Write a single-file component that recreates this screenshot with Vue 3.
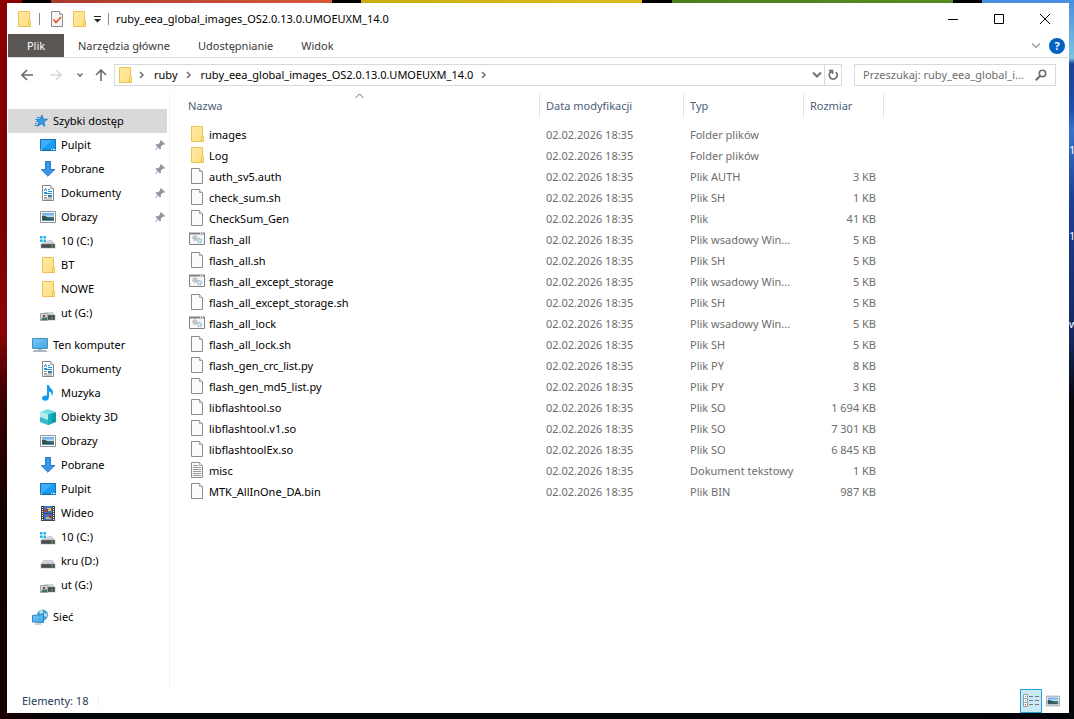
<template>
  <div class="desktop">
    <div class="desktop-labels" aria-hidden="true">
      <span class="desktop-label label-one">1</span>
      <span class="desktop-label label-ten">10</span>
      <span class="desktop-label label-w">w</span>
    </div>

    <!-- 아이콘 정의 -->
    <svg class="icon-defs" aria-hidden="true">
      <defs>
        <linearGradient id="g-folder" x1="0" y1="0" x2="1" y2="1">
          <stop offset="0" stop-color="#ffe9a2" />
          <stop offset="1" stop-color="#ffdf80" />
        </linearGradient>
        <linearGradient id="g-screen" x1="0" y1="0" x2="1" y2="1">
          <stop offset="0" stop-color="#7cc8f8" />
          <stop offset="1" stop-color="#3ba3e8" />
        </linearGradient>
        <linearGradient id="g-photo" x1="0" y1="0" x2="0" y2="1">
          <stop offset="0" stop-color="#5b9be6" />
          <stop offset="0.5" stop-color="#c9e8f8" />
          <stop offset="0.55" stop-color="#3f6d6a" />
          <stop offset="1" stop-color="#5a8fc0" />
        </linearGradient>
      </defs>
      <symbol id="i-folder" viewBox="0 0 16 16">
        <path d="M2.5.5h11v9.500h1v5.500h-12z" fill="url(#g-folder)" stroke="#e9c452" />
        <path d="M12.500 15V11l1-1" fill="none" stroke="#e9c452" />
      </symbol>
      <symbol id="i-file" viewBox="0 0 16 16">
        <path d="M2.500.5h8l3 3v12h-11z" fill="#fafbfb" stroke="#8c8c8c" />
        <path d="M10.500.5v3h3" fill="#e4e4e4" stroke="#a5a5a5" />
      </symbol>
      <symbol id="i-text" viewBox="0 0 16 16">
        <path d="M2.500.5h8l3 3v12h-11z" fill="#fafbfb" stroke="#8c8c8c" />
        <path d="M10.500.5v3h3" fill="#e4e4e4" stroke="#a5a5a5" />
        <path d="M4 3.500h5M4 5.500h8M4 7.500h8M4 9.500h8M4 11.500h8M4 13.500h8" stroke="#999" />
      </symbol>
      <symbol id="i-batch" viewBox="0 0 16 16">
        <path d="M.5 2.500h15v11H.5z" fill="#f8f8f8" stroke="#808286" />
        <path d="M0 2.500h16" stroke="#808286" stroke-width="2" />
        <path d="M11 2.500h1M13 2.500h1" stroke="#fff" />
        <circle cx="6" cy="7" r="2" fill="none" stroke="#a2a8ac" stroke-width="1.500" stroke-dasharray="1 .6" />
        <circle cx="6" cy="7" r="1.200" fill="#e5e5e5" stroke="#8d9499" stroke-width=".5" />
        <circle cx="10.500" cy="9.500" r="2" fill="#d6ecf8" stroke="#8fb4cb" stroke-width="1.500" stroke-dasharray="1 .6" />
      </symbol>
      <symbol id="i-check" viewBox="0 0 16 16">
        <path d="M2.500.5h8l3 3v12h-11z" fill="#f5f5f5" stroke="#8c8c8c" />
        <path d="M10.500.5v3h3" fill="#e4e4e4" stroke="#a5a5a5" />
        <path d="M4.500 8.500l2.500 3L12 6" fill="none" stroke="#e4572b" stroke-width="1.600" />
      </symbol>
      <symbol id="i-star" viewBox="0 0 16 16">
        <path d="M10 2l1.200 4.100 4.300.2-3.600 2.500 1.100 4.700-3.500-2.700-4.200 2.500 1.700-4.300L4 6.200l4 .1z" fill="#2f9be4" stroke="#1f78bd" stroke-width=".8" />
        <path d="M5 4.500h3M3 6.500h2M4 8.500h2M3 10.500h2M2 12.500h3" stroke="#3b93cf" />
      </symbol>
      <symbol id="i-desktop" viewBox="0 0 16 16">
        <path d="M.5 2.500h15v11H.5z" fill="#1e9bf3" stroke="#1273bd" />
        <path d="M1 12V3h12z" fill="#3daefa" />
        <path d="M1 12.500h14" stroke="#1b7dc9" />
        <path d="M1 12.500h1M11 12.500h1M13 12.500h2" stroke="#fff" />
      </symbol>
      <symbol id="i-download" viewBox="0 0 16 16">
        <path d="M5.500.5h5v8h4.300L8 15.300 1.200 8.500h4.300z" fill="#3c96e6" stroke="#2b7cc7" />
      </symbol>
      <symbol id="i-document" viewBox="0 0 16 16">
        <path d="M2.500.5h8l3 3v12h-11z" fill="#fff" stroke="#858585" />
        <path d="M10.500.5v3h3" fill="#eee" stroke="#a5a5a5" />
        <path d="M4 7.500h3M8 4.500h2M8 6.500h4M4 8.500h8" stroke="#2295d8" />
        <path d="M4.500 6l1-3 1 3" fill="none" stroke="#2295d8" />
        <path d="M4 10.500h3M4 12.500h3M4 14h8" stroke="#8d9499" />
        <path d="M8 10h4v2.500H8z" fill="#3f7fa8" />
      </symbol>
      <symbol id="i-picture" viewBox="0 0 16 16">
        <path d="M.5 2.500h15v11H.5z" fill="#fff" stroke="#909396" />
        <path d="M2 4h12v8H2z" fill="url(#g-photo)" />
        <path d="M2 7q3-1 6 1.500t6 1.500v1H2z" fill="#2f5557" />
      </symbol>
      <symbol id="i-windisk" viewBox="0 0 16 16">
        <path d="M0 3h2.500v2.500H0zM3.500 3H6v2.500H3.500zM0 6.500h2.500V9H0zM3.500 6.500H6V9H3.500z" fill="#15b4ee" />
        <path d="M7 7h5l3 4H1l2-2h4z" fill="#d0d3d5" />
        <path d="M1 11h14v4H1z" fill="#474b4d" stroke="#9a9da0" stroke-width=".6" />
        <path d="M11 13h2" stroke="#54dd5c" />
      </symbol>
      <symbol id="i-disk" viewBox="0 0 16 16">
        <path d="M3 7h10l2 4H1z" fill="#d0d3d5" />
        <path d="M1 11h14v4H1z" fill="#474b4d" stroke="#9a9da0" stroke-width=".6" />
        <path d="M11 13h2" stroke="#54dd5c" />
      </symbol>
      <symbol id="i-netdisk" viewBox="0 0 16 16">
        <path d="M4 7h9l2 3H4z" fill="#d0d3d5" />
        <path d="M6 10h9v5H6z" fill="#474b4d" stroke="#9a9da0" stroke-width=".6" />
        <path d="M11 13h2" stroke="#54dd5c" />
        <path d="M.5 8.500h7v7h-7z" fill="#cfdcd8" stroke="#a2a5a5" />
        <path d="M1 15l2-3 1 1 3-1v3z" fill="#42715c" />
        <circle cx="4" cy="11" r="1.300" fill="#7a5547" />
      </symbol>
      <symbol id="i-computer" viewBox="0 0 16 16">
        <path d="M.5 1.500h15v10H.5z" fill="url(#g-screen)" stroke="#4d8db5" />
        <path d="M6 12h4v1H6z" fill="#9bb2c0" />
        <path d="M2 13.500h12l1 1H1z" fill="#b9c4cb" stroke="#8c9aa3" stroke-width=".6" />
      </symbol>
      <symbol id="i-music" viewBox="0 0 16 16">
        <path d="M7 0h2c0 3 4 4 4 7.500 0 1.500-.6 2.700-1.500 3.500.5-2.500-.3-4-2.500-4.500V12c0 2.300-1.500 3.700-3.700 3.700C3.500 15.700 2 14.800 2 13.200 2 11.500 4 10 7 10.500z" fill="#119bee" />
      </symbol>
      <symbol id="i-cube" viewBox="0 0 16 16">
        <path d="M0 3l8-3 8 3-8 2.500z" fill="#7adbe2" />
        <path d="M0 3l8 2.500V16l-8-3z" fill="#b3edf0" />
        <path d="M0 8l8 3v5l-8-3z" fill="#35bdc8" />
        <path d="M16 3L8 5.500V16l8-3z" fill="#1299a9" />
        <path d="M8 5.500l4-1.300v10.300L8 16z" fill="#18b2c0" />
      </symbol>
      <symbol id="i-video" viewBox="0 0 16 16">
        <path d="M1 1h14v15H1z" fill="#444" />
        <path d="M4 1h8v7H4z" fill="#4178cd" />
        <path d="M4 9h8v6H4z" fill="#3a74d6" />
        <path d="M7 3h4v3H7zM6 12h5v2H6z" fill="#e9b33b" />
        <path d="M5 4h3v3H5zM9 10h2v3H9z" fill="#a23c2d" />
        <path d="M2.500 2v14M13.500 2v14" stroke="#fff" stroke-dasharray="1 1" />
      </symbol>
      <symbol id="i-network" viewBox="0 0 16 16">
        <circle cx="10.500" cy="6" r="5.500" fill="#4b9fcd" />
        <path d="M7 2q3-2 4 0t-3 3zM12 4l3 1v3l-3-1z" fill="#b8e0f2" />
        <path d="M.5 6.500l11-1v8l-11-.5z" fill="url(#g-screen)" stroke="#2f83bd" />
        <path d="M3 15h6" stroke="#94a9b5" />
      </symbol>
      <symbol id="i-pin" viewBox="0 0 16 16">
        <path d="M9 3l4 4-1 1-1-.4-2.200 2.200.2 1.700-1 1L6 10.500 3.500 13l-.5-.5L5.500 10 3.500 8l1-1 1.700.2L8.400 5 8 4z" fill="#8c98a5" transform="translate(1 0)" />
      </symbol>
      <symbol id="i-details" viewBox="0 0 16 16">
        <path d="M.5 1.500h4v4h-4zM.5 5.500h4v4h-4zM.5 9.500h4v4h-4z" fill="#fff" stroke="#999" />
        <path d="M2 3.500h1" stroke="#24864b" />
        <path d="M2 7.500h1" stroke="#3b8ce0" />
        <path d="M2 11.500h1" stroke="#d32a1e" />
        <path d="M6 3.500h4M12 3.500h4M6 7.500h4M12 7.500h4M6 11.500h4M12 11.500h4" stroke="#777" />
      </symbol>
    </svg>

    <div class="window">
      <header class="title-bar">
        <svg class="icon"><use href="#i-folder" /></svg>
        <span class="title-sep"></span>
        <button class="quick-btn" aria-label="Właściwości"><svg class="icon"><use href="#i-check" /></svg></button>
        <button class="quick-btn" aria-label="Nowy folder"><svg class="icon"><use href="#i-folder" /></svg></button>
        <button class="quick-btn" aria-label="Dostosuj">
          <svg class="quick-arrow" viewBox="0 0 8 8"><path d="M1 1.500h7" stroke="#222" /><path d="M1 4h7L4.500 7.500z" fill="#222" /></svg>
        </button>
        <span class="title-sep"></span>
        <span class="title-text">{{ folderName }}</span>
        <div class="window-controls">
          <button aria-label="Minimalizuj"><svg viewBox="0 0 10 10"><path d="M0 5.500h10" /></svg></button>
          <button aria-label="Maksymalizuj"><svg viewBox="0 0 10 10"><path d="M.5.5h9v9h-9z" /></svg></button>
          <button aria-label="Zamknij"><svg viewBox="0 0 10 10"><path d="M0 0l10 10M10 0L0 10" /></svg></button>
        </div>
      </header>

      <nav class="ribbon">
        <button
          v-for="tab in tabs"
          :key="tab"
          class="ribbon-tab"
          :class="{ file: tab === 'Plik' }"
        >{{ tab }}</button>
        <button class="ribbon-toggle" aria-label="Rozwiń wstążkę">
          <svg class="chevron-down" viewBox="0 0 10 6"><path d="M1 .5l4 4 4-4" stroke="#a0a0a0" stroke-width="1.500" /></svg>
        </button>
        <button class="help-btn" aria-label="Pomoc">?</button>
      </nav>

      <div class="address-row">
        <div class="nav-buttons">
          <button aria-label="Wstecz"><svg viewBox="0 0 12 12"><path d="M12 6H1M6 1L1 6l5 5" stroke="#6b6b6b" /></svg></button>
          <button aria-label="Dalej" disabled><svg viewBox="0 0 12 12"><path d="M0 6h11M6 1l5 5-5 5" stroke="#dadada" /></svg></button>
          <button class="history-btn" aria-label="Ostatnie lokalizacje"><svg viewBox="0 0 12 12"><path d="M3.500 4.500l2.500 2.500 2.500-2.500" stroke="#777" /></svg></button>
          <button aria-label="W górę"><svg viewBox="0 0 12 12"><path d="M6 12V1M1 6l5-5 5 5" stroke="#6b6b6b" /></svg></button>
        </div>
        <div class="address-box">
          <svg class="icon"><use href="#i-folder" /></svg>
          <svg class="crumb-arrow" viewBox="0 0 6 8"><path d="M1 1l3 3-3 3" /></svg>
          <template v-for="crumb in crumbs" :key="crumb">
            <button class="crumb">{{ crumb }}</button>
            <svg class="crumb-arrow" viewBox="0 0 6 8"><path d="M1 1l3 3-3 3" /></svg>
          </template>
          <button class="address-drop" aria-label="Poprzednie lokalizacje">
            <svg class="chevron-down" viewBox="0 0 10 6"><path d="M1 .5l4 4 4-4" stroke="#6f6f6f" stroke-width="2" /></svg>
          </button>
          <button class="refresh-btn" aria-label="Odśwież">
            <svg viewBox="0 0 12 12"><path d="M9 3.200A4 4 0 1 1 4.500 2.500M2 1.500h3.500V5" stroke="#6b6b6b" stroke-width="1.600" fill="none" /></svg>
          </button>
        </div>
        <label class="search-box">
          <input v-model="search" type="text" aria-label="Przeszukaj" placeholder="Przeszukaj: ruby_eea_global_i..." />
          <svg viewBox="0 0 12 12"><circle cx="7.500" cy="4.500" r="3.200" /><path d="M5 7L.8 11.200" stroke-width="2" /></svg>
        </label>
      </div>

      <div class="content">
        <aside class="sidebar">
          <ul v-for="group in groups" :key="group.name" class="tree-group">
            <li>
              <button
                class="tree-item root"
                :class="{ selected: selected === group.name }"
                @click="selected = group.name"
              >
                <svg class="icon"><use :href="'#i-' + group.icon" /></svg>
                <span>{{ group.name }}</span>
              </button>
            </li>
            <li v-for="item in group.items" :key="item.name">
              <button
                class="tree-item"
                :class="{ selected: selected === group.name + item.name }"
                @click="selected = group.name + item.name"
              >
                <svg class="icon"><use :href="'#i-' + item.icon" /></svg>
                <span>{{ item.name }}</span>
                <svg v-if="item.pinned" class="icon pin"><use href="#i-pin" /></svg>
              </button>
            </li>
          </ul>
        </aside>

        <main class="file-area">
          <table class="file-table">
            <colgroup>
              <col class="col-name" />
              <col class="col-date" />
              <col class="col-type" />
              <col class="col-size" />
            </colgroup>
            <thead>
              <tr>
                <th class="name-cell">
                  Nazwa
                  <svg class="sort-arrow" viewBox="0 0 9 6"><path d="M.5 5l4-4 4 4" /></svg>
                </th>
                <th>Data modyfikacji</th>
                <th>Typ</th>
                <th>Rozmiar</th>
              </tr>
            </thead>
            <tbody>
              <tr v-for="file in files" :key="file.name">
                <td class="name-cell">
                  <div class="file-name">
                    <svg class="icon"><use :href="'#i-' + file.icon" /></svg>
                    <span>{{ file.name }}</span>
                  </div>
                </td>
                <td>02.02.2026 18:35</td>
                <td>{{ file.type }}</td>
                <td class="size-cell">{{ file.size }}</td>
              </tr>
            </tbody>
          </table>
        </main>
      </div>

      <footer class="status-bar">
        <span class="status-count">Elementy: {{ files.length }}</span>
        <div class="view-buttons">
          <button class="active" aria-label="Szczegóły"><svg class="icon"><use href="#i-details" /></svg></button>
          <button aria-label="Duże ikony"><svg class="icon small"><use href="#i-picture" /></svg></button>
        </div>
      </footer>
    </div>
  </div>
</template>

<script setup>
import { ref } from 'vue';

const folderName = 'ruby_eea_global_images_OS2.0.13.0.UMOEUXM_14.0';
const tabs = ['Plik', 'Narzędzia główne', 'Udostępnianie', 'Widok'];
const crumbs = ['ruby', folderName];

const search = ref('');
const selected = ref('Szybki dostęp');

// 1. 왼쪽 트리
const groups = [
  {
    name: 'Szybki dostęp',
    icon: 'star',
    items: [
      { name: 'Pulpit', icon: 'desktop', pinned: true },
      { name: 'Pobrane', icon: 'download', pinned: true },
      { name: 'Dokumenty', icon: 'document', pinned: true },
      { name: 'Obrazy', icon: 'picture', pinned: true },
      { name: '10 (C:)', icon: 'windisk' },
      { name: 'BT', icon: 'folder' },
      { name: 'NOWE', icon: 'folder' },
      { name: 'ut (G:)', icon: 'netdisk' },
    ],
  },
  {
    name: 'Ten komputer',
    icon: 'computer',
    items: [
      { name: 'Dokumenty', icon: 'document' },
      { name: 'Muzyka', icon: 'music' },
      { name: 'Obiekty 3D', icon: 'cube' },
      { name: 'Obrazy', icon: 'picture' },
      { name: 'Pobrane', icon: 'download' },
      { name: 'Pulpit', icon: 'desktop' },
      { name: 'Wideo', icon: 'video' },
      { name: '10 (C:)', icon: 'windisk' },
      { name: 'kru (D:)', icon: 'disk' },
      { name: 'ut (G:)', icon: 'netdisk' },
    ],
  },
  { name: 'Sieć', icon: 'network', items: [] },
];

// 2. 파일 목록
const files = [
  { name: 'images', icon: 'folder', type: 'Folder plików', size: '' },
  { name: 'Log', icon: 'folder', type: 'Folder plików', size: '' },
  { name: 'auth_sv5.auth', icon: 'file', type: 'Plik AUTH', size: '3 KB' },
  { name: 'check_sum.sh', icon: 'file', type: 'Plik SH', size: '1 KB' },
  { name: 'CheckSum_Gen', icon: 'file', type: 'Plik', size: '41 KB' },
  { name: 'flash_all', icon: 'batch', type: 'Plik wsadowy Win...', size: '5 KB' },
  { name: 'flash_all.sh', icon: 'file', type: 'Plik SH', size: '5 KB' },
  { name: 'flash_all_except_storage', icon: 'batch', type: 'Plik wsadowy Win...', size: '5 KB' },
  { name: 'flash_all_except_storage.sh', icon: 'file', type: 'Plik SH', size: '5 KB' },
  { name: 'flash_all_lock', icon: 'batch', type: 'Plik wsadowy Win...', size: '5 KB' },
  { name: 'flash_all_lock.sh', icon: 'file', type: 'Plik SH', size: '5 KB' },
  { name: 'flash_gen_crc_list.py', icon: 'file', type: 'Plik PY', size: '8 KB' },
  { name: 'flash_gen_md5_list.py', icon: 'file', type: 'Plik PY', size: '3 KB' },
  { name: 'libflashtool.so', icon: 'file', type: 'Plik SO', size: '1 694 KB' },
  { name: 'libflashtool.v1.so', icon: 'file', type: 'Plik SO', size: '7 301 KB' },
  { name: 'libflashtoolEx.so', icon: 'file', type: 'Plik SO', size: '6 845 KB' },
  { name: 'misc', icon: 'text', type: 'Dokument tekstowy', size: '1 KB' },
  { name: 'MTK_AllInOne_DA.bin', icon: 'file', type: 'Plik BIN', size: '987 KB' },
];
</script>

<style>
body {
  margin: 0;
  background: #000;
}
</style>

<style scoped>
/* ── 1. 바탕화면 ── */
.desktop {
  position: relative;
  box-sizing: border-box;
  min-height: 100vh;
  padding: 3px 5px 6px 7px;
  display: flex;
  overflow: hidden;
  font-family: "Noto Sans", "Open Sans", sans-serif;
  font-size: 11px;
  line-height: 16px;
  color: #000;
  background:
    linear-gradient(90deg, #8c0000 0 22px, #000 22px 51px, #a8382c 51px, #d9583a 332px, #000 332px 361px, #c9ae10 361px, #d8bd1a 642px, #000 642px 672px, #4d7d1c 672px, #5a8a22 953px, #000 953px 982px, #4a90e0 982px) top / 100% 3px no-repeat,
    linear-gradient(180deg, #8c0000, #7a0000 200px, #8a0505 330px, #3a0000 400px, #120000 520px, #1a0003 100%) left / 7px 100% no-repeat,
    linear-gradient(180deg, #4a90e0, #7cc4e0 58px, #1c3f94 64px, #1e4fae 110px, #3a72cc 130px, #1c3f94 200px, #14265c 340px, #04060c 400px, #010409 100%) right / 5px 100% no-repeat,
    linear-gradient(90deg, #1a0003, #020608 60px, #020409);
}

button {
  font: inherit;
  color: inherit;
  background: none;
  border: 0;
  padding: 0;
  margin: 0;
}

svg {
  display: block;
  flex-shrink: 0;
}

.desktop-label {
  position: absolute;
  left: calc(100% - 5px);
  color: #fff;
}
.label-one { top: 142px; }
.label-ten { top: 228px; }
.label-w { top: 316px; }

.icon-defs { position: absolute; width: 0; height: 0; }
.icon { width: 16px; height: 16px; }

/* ── 2. 창 ── */
.window {
  flex: 1;
  min-width: 0;
  display: flex;
  flex-direction: column;
  padding: 0 1px;
  background: #fff;
}

.title-bar {
  display: flex;
  align-items: center;
  height: 31px;
  padding-left: 8px;
}
.title-sep { width: 1px; height: 12px; margin: 0 7px; background: #8a8a8a; }
.quick-btn { margin-left: 2px; }
.quick-btn + .quick-btn { margin-left: 6px; }
.quick-arrow { width: 8px; height: 8px; }
.title-text {
  flex: 1;
  min-width: 0;
  overflow: hidden;
  white-space: nowrap;
}

.window-controls { display: flex; align-self: stretch; }
.window-controls button {
  width: 46px;
  display: flex;
  align-items: center;
  justify-content: center;
}
.window-controls button:hover { background: #e5e5e5; }
.window-controls svg {
  width: 10px;
  height: 10px;
  fill: none;
  stroke: #000;
}

/* ── 3. 리본 탭 ── */
.ribbon {
  display: flex;
  align-items: center;
  height: 23px;
  padding-right: 3px;
  border-bottom: 1px solid #dadbdc;
  color: #3a3a3a;
}
.ribbon-tab { align-self: stretch; padding: 0 14px; }
.ribbon-tab.file { width: 56px; padding: 0; background: #595654; color: #fff; }
.ribbon-toggle { margin-left: auto; padding: 4px 8px; }
.chevron-down { width: 10px; height: 6px; fill: none; }
.help-btn {
  width: 16px;
  height: 16px;
  border-radius: 50%;
  background: #0063c1;
  color: #fff;
  font-weight: 700;
}

/* ── 4. 주소 표시줄 ── */
.address-row {
  display: flex;
  align-items: center;
  height: 34px;
  padding: 0 12px 0 13px;
}
.nav-buttons { display: flex; align-items: center; }
.nav-buttons button { width: 12px; margin-right: 17px; }
.nav-buttons .history-btn { margin-right: 9px; }
.nav-buttons button:last-child { margin-right: 7px; }
.nav-buttons button:nth-child(2) { margin-right: 12px; }
.nav-buttons svg { width: 12px; height: 12px; fill: none; stroke-width: 1.6; }
.address-box {
  flex: 1;
  min-width: 0;
  display: flex;
  align-items: center;
  box-sizing: border-box;
  height: 22px;
  padding-left: 2px;
  border: 1px solid #d9d9d9;
}
.crumb { margin: 0 8px 0 9px; white-space: nowrap; }
.crumb-arrow { width: 6px; height: 8px; fill: none; stroke: #6f6f6f; stroke-width: 1.5; }
.icon + .crumb-arrow { margin-left: 6px; }
.address-drop { margin-left: auto; padding: 6px 2px; }
.refresh-btn {
  align-self: stretch;
  padding: 0 2px;
  border-left: 1px solid #d9d9d9;
}
.refresh-btn svg { width: 12px; height: 12px; }
.search-box {
  display: flex;
  align-items: center;
  box-sizing: border-box;
  width: 202px;
  height: 22px;
  margin-left: 12px;
  padding: 0 8px;
  border: 1px solid #d9d9d9;
}
.search-box input {
  flex: 1;
  min-width: 0;
  padding: 0;
  border: 0;
  outline: 0;
  font: inherit;
  background: none;
}
.search-box input::placeholder { color: #6d6d6d; opacity: 1; }
.search-box svg { width: 12px; height: 12px; fill: none; stroke: #6b6b6b; stroke-width: 1.6; }

/* ── 5. 왼쪽 트리 ── */
.content { flex: 1; display: flex; min-height: 0; }
.sidebar {
  width: 162px;
  flex-shrink: 0;
  box-sizing: border-box;
  margin-top: 1px;
  padding: 16px 2px 0 0;
  border-right: 1px solid #f2f2f2;
}
.tree-group { list-style: none; margin: 0 0 8px; padding: 0; }
.tree-item {
  display: flex;
  align-items: center;
  gap: 5px;
  width: 100%;
  height: 24px;
  padding-left: 32px;
  text-align: left;
}
.tree-item.root { padding-left: 24px; }
.tree-item:hover { background: #e5f3ff; }
.tree-item.selected { background: #d9d9d9; }
.pin { margin-left: auto; }

/* ── 6. 파일 목록 ── */
.file-area { flex: 1; min-width: 0; padding-top: 1px; }
.file-table {
  width: 714px;
  table-layout: fixed;
  border-collapse: separate;
  border-spacing: 0;
  color: #6d6d6d;
}
.col-name { width: 370px; }
.col-date { width: 144px; }
.col-type { width: 120px; }
.col-size { width: 80px; }
th {
  position: relative;
  height: 25px;
  padding: 0 0 0 6px;
  border-right: 1px solid #e5e5e5;
  box-sizing: border-box;
  font-weight: 400;
  text-align: left;
  color: #4c607a;
}
td { height: 21px; padding: 0 0 0 6px; white-space: nowrap; }
th.name-cell { padding-left: 18px; }
td.name-cell { padding-left: 19px; }
tbody::before { content: ""; display: block; height: 6px; }
.file-name { display: flex; align-items: center; gap: 4px; color: #000; }
.file-name .icon { margin-bottom: 1px; }
td.size-cell { padding-right: 8px; text-align: right; }
.sort-arrow {
  position: absolute;
  top: 0;
  left: 50%;
  width: 9px;
  height: 6px;
  fill: none;
  stroke: #6b6b6b;
}

/* ── 7. 상태 표시줄 ── */
.status-bar {
  display: flex;
  align-items: center;
  height: 24px;
  padding: 0 4px 0 14px;
  color: #1e395b;
}
.status-count { padding-right: 10px; border-right: 1px solid #f0f0f0; line-height: 12px; }
.view-buttons { display: flex; align-self: stretch; margin-left: auto; }
.view-buttons button {
  display: flex;
  align-items: center;
  justify-content: center;
  box-sizing: border-box;
  width: 22px;
}
.view-buttons .active { border: 1px solid #26a0da; background: #cbe8f6; }
.icon.small { width: 14px; height: 14px; }
</style>
